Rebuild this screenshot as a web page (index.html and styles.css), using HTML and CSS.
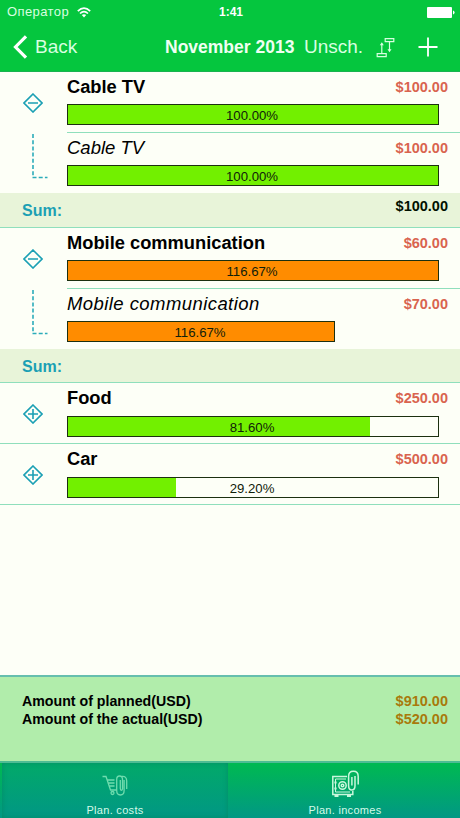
FILE: index.html
```html
<!DOCTYPE html>
<html lang="en">
<head>
    <meta charset="UTF-8">
    <title>November 2013</title>
    <link rel="stylesheet" href="styles.css">
</head>
<body>
    <div class="header">
        <div class="status">
            <span class="carrier">Оператор</span>
            <svg class="wifi" width="14" height="11" viewBox="0 0 14 11" fill="none" stroke="#fff" stroke-width="1.7">
                <path d="M.8 4.1Q7-1.9 13.2 4.1M3 6.5Q7 2.7 11 6.5"/>
                <path d="M7 10.4L4.8 8.1Q7 6.3 9.2 8.1z" fill="#fff" stroke="none"/>
            </svg>
            <span class="clock">1:41</span>
            <svg class="battery" width="28" height="11" viewBox="0 0 28 11" fill="#fff">
                <rect x="0" y="0" width="25" height="11" rx="1"/>
                <path d="M26 3.5q1.6.5 1.6 2t-1.6 2z"/>
            </svg>
        </div>
        <div class="nav">
            <svg class="arrow" width="15" height="24" viewBox="0 0 15 24" fill="none" stroke="#fff" stroke-width="3.2">
                <path d="M13 1.3L2.5 12L13 22.7"/>
            </svg>
            <span class="back">Back</span>
            <span class="month">November 2013</span>
            <span class="unsch">Unsch.</span>
            <svg class="sort" width="20" height="21" viewBox="0 0 20 21" fill="none" stroke="#d8ffe0" stroke-width="1.2">
                <path d="M9.2 1.6h8.6v3H9.2zM1.2 16.6h9v3h-9zM5.8 16.6V6.5M13.5 4.6v9"/>
                <path d="M3.8 8.2L5.8 5.2l2 3zM11.5 12.2l2 3 2-3z" fill="#d8ffe0" stroke="none"/>
            </svg>
            <svg class="plus" width="20" height="20" viewBox="0 0 20 20" fill="none" stroke="#fff" stroke-width="1.8">
                <path d="M10 .5v19M.5 10h19"/>
            </svg>
        </div>
    </div>

    <div class="list">
        <div class="item">
            <div class="side">
                <svg class="toggle" width="20" height="20" viewBox="0 0 20 20"><path d="M10 1l9 9-9 9-9-9zM5 10h10"/></svg>
            </div>
            <div class="main line">
                <div class="name">Cable TV</div>
                <div class="price">$100.00</div>
                <div class="bar green"><div class="fill" style="width: 100%"></div><span>100.00%</span></div>
            </div>
        </div>
        <div class="item child">
            <div class="side">
                <svg class="branch" width="18" height="46" viewBox="0 0 18 46"><path d="M1 0v43.5"/><path d="M.5 43.5h15"/></svg>
            </div>
            <div class="main">
                <div class="name">Cable TV</div>
                <div class="price">$100.00</div>
                <div class="bar green"><div class="fill" style="width: 100%"></div><span>100.00%</span></div>
            </div>
        </div>
        <div class="sum first"><span>Sum:</span><b>$100.00</b></div>

        <div class="item">
            <div class="side">
                <svg class="toggle" width="20" height="20" viewBox="0 0 20 20"><path d="M10 1l9 9-9 9-9-9zM5 10h10"/></svg>
            </div>
            <div class="main line">
                <div class="name">Mobile communication</div>
                <div class="price">$60.00</div>
                <div class="bar orange"><div class="fill" style="width: 100%"></div><span>116.67%</span></div>
            </div>
        </div>
        <div class="item child">
            <div class="side">
                <svg class="branch" width="18" height="46" viewBox="0 0 18 46"><path d="M1 0v43.5"/><path d="M.5 43.5h15"/></svg>
            </div>
            <div class="main">
                <div class="name wide">Mobile communication</div>
                <div class="price">$70.00</div>
                <div class="bar orange" style="width: 268px"><div class="fill" style="width: 100%"></div><span>116.67%</span></div>
            </div>
        </div>
        <div class="sum"><span>Sum:</span></div>

        <div class="item closed">
            <div class="side">
                <svg class="toggle" width="20" height="20" viewBox="0 0 20 20"><path d="M10 1l9 9-9 9-9-9zM5 10h10M10 5v10"/></svg>
            </div>
            <div class="main">
                <div class="name">Food</div>
                <div class="price">$250.00</div>
                <div class="bar green"><div class="fill" style="width: 81.6%"></div><span>81.60%</span></div>
            </div>
        </div>
        <div class="item closed">
            <div class="side">
                <svg class="toggle" width="20" height="20" viewBox="0 0 20 20"><path d="M10 1l9 9-9 9-9-9zM5 10h10M10 5v10"/></svg>
            </div>
            <div class="main">
                <div class="name">Car</div>
                <div class="price">$500.00</div>
                <div class="bar green"><div class="fill" style="width: 29.2%"></div><span>29.20%</span></div>
            </div>
        </div>
    </div>

    <div class="total">
        <div class="row"><span>Amount of planned(USD)</span><b>$910.00</b></div>
        <div class="row"><span>Amount of the actual(USD)</span><b>$520.00</b></div>
    </div>

    <div class="tabs">
        <div class="tab active">
            <svg class="icon" width="28" height="28" viewBox="0 0 28 28" fill="none" stroke="#6fdcae" stroke-width="1.3">
                <path d="M1.5 6.5H5L9.500 20h6M6 10h7.500M7 13h6.500M8 16h5.500"/>
                <circle cx="11.500" cy="23" r="1.500"/>
                <path d="M19.300 10v8.500q0 1.800 1.100 1.800t1.100-1.800V9.500q0-3.500-2.900-3.500t-2.900 3.500v11q0 4.500 3.700 4.500t3.700-4.500V10M21 6.500q4.700-.5 4.700 4.500v8"/>
            </svg>
            <span>Plan. costs</span>
        </div>
        <div class="tab">
            <svg class="icon" width="28" height="28" viewBox="0 0 28 28" fill="none" stroke="#c9f7dc" stroke-width="1.5">
                <path d="M16 6.500H1.800v18h20V21"/>
                <path d="M15 9H4.500v13H19" stroke-width="1"/>
                <path d="M4.500 11.500v2M4.500 17.500v2" stroke-width="2.200"/>
                <circle cx="11.500" cy="15.500" r="3.700"/>
                <circle cx="11.500" cy="15.500" r="1.300"/>
                <path d="M3.500 26h4M16 26h4" stroke-width="1.800"/>
                <path d="M24 6v9.500q0 4.500-3.200 4.500t-3.200-4.500V6.500q0-5.200 4.800-5.200T27.200 6.500v8M20.900 7v8.500"/>
            </svg>
            <span>Plan. incomes</span>
        </div>
    </div>
</body>
</html>
```
FILE: styles.css
```css
body{
    margin: 0;
    width: 460px;
    height: 818px;
    display: flex;
    flex-direction: column;
    background: #fdfff7;
    font-family: "Liberation Sans", Arial, sans-serif;
    color: #000;
    overflow: hidden;
}
svg{
    display: block;
    flex: none;
}

.header{
    box-sizing: border-box;
    height: 72px;
    background: #05c63e;
    border-bottom: 1px solid #18b350;
    color: #fff;
}
.status{
    display: grid;
    grid-template-columns: 70px 142px 1fr 28px;
    align-items: center;
    height: 23px;
    padding: 0 5px 0 7px;
    font-size: 13px;
    line-height: 24px;
}
.carrier{
    color: #d8ffe0;
    letter-spacing: 0.4px;
}
.clock{
    font-weight: bold;
    font-size: 12px;
}
.nav{
    display: flex;
    align-items: center;
    height: 48px;
    padding-left: 13px;
    font-size: 19px;
    white-space: nowrap;
}
.back{
    width: 130px;
    margin-left: 7px;
    color: #d8ffe0;
}
.month{
    width: 139px;
    font-weight: bold;
    font-size: 17.5px;
    color: #effff2;
}
.unsch{
    width: 72px;
    color: #d8ffe0;
}
.plus{
    margin-left: 22px;
}

.list{
    flex: 1;
}
.item{
    display: flex;
    height: 61px;
}
.child{
    height: 60px;
}
.side{
    width: 67px;
    flex: none;
}
.toggle{
    margin: 21px 0 0 23px;
    fill: none;
    stroke: #1ba0b4;
    stroke-width: 1.6;
}
.branch{
    margin: 1px 0 0 32px;
    fill: none;
    stroke: #2bacba;
    stroke-width: 1.6;
    stroke-dasharray: 4 2.2;
}
.main{
    flex: 1;
    display: grid;
    grid-template-columns: 1fr auto;
    grid-template-rows: 32px 21px;
    padding-right: 12px;
}
.line{
    border-bottom: 1px solid #8fdfbc;
}
.name{
    font-size: 18.3px;
    font-weight: bold;
    line-height: 30px;
}
.child .name{
    font-size: 18.5px;
    font-weight: normal;
    font-style: italic;
}
.child .wide{
    letter-spacing: 0.43px;
}
.price{
    font-size: 14.5px;
    font-weight: bold;
    line-height: 30px;
    color: #d9644f;
}
.bar{
    box-sizing: border-box;
    grid-column: 1 / 3;
    display: grid;
    grid-template-rows: 19px;
    width: 372px;
    height: 21px;
    border: 1px solid #1c3010;
    font-size: 13.2px;
    line-height: 21px;
    text-align: center;
}
.bar .fill, .bar span{
    grid-area: 1 / 1;
}
.bar span{
    margin-right: 2px;
    color: #10200a;
}
.green .fill{
    background: #72f000;
}
.orange .fill{
    background: #ff8c00;
}
.closed{
    box-sizing: border-box;
    border-bottom: 1px solid #8fdfbc;
}
.closed .main{
    grid-template-rows: 33px 21px;
}

.sum{
    box-sizing: border-box;
    display: flex;
    justify-content: space-between;
    height: 34px;
    padding: 0 12px 0 22px;
    background: #e8f4d9;
    border-bottom: 1px solid #8fdfbc;
    font-size: 16px;
    font-weight: bold;
    line-height: 35px;
    color: #1ba0b4;
}
.first{
    height: 35px;
}
.sum b{
    font-size: 14.5px;
    line-height: 27px;
    color: #001000;
}

.total{
    box-sizing: border-box;
    height: 88px;
    padding: 16px 12px 0 22px;
    background: #b1edab;
    border-top: 2px solid #66bfae;
    border-bottom: 2px solid #4ebc94;
}
.row{
    display: flex;
    justify-content: space-between;
    font-size: 14.2px;
    font-weight: bold;
    line-height: 17.5px;
}
.row b{
    font-size: 14.5px;
    color: #a87a0c;
}

.tabs{
    display: grid;
    grid-template-columns: 230px 230px;
    height: 55px;
    background: linear-gradient(#00b951, #019884);
}
.tab{
    display: flex;
    flex-direction: column;
    align-items: center;
    color: #d5fae8;
    font-size: 11px;
    line-height: 14px;
    letter-spacing: 0.3px;
}
.active{
    margin: 0 2px;
    background: linear-gradient(#02a969, #019784);
    box-shadow: inset 0 0 5px #038c66;
}
.icon{
    margin: 7px 0 5px;
}
```
